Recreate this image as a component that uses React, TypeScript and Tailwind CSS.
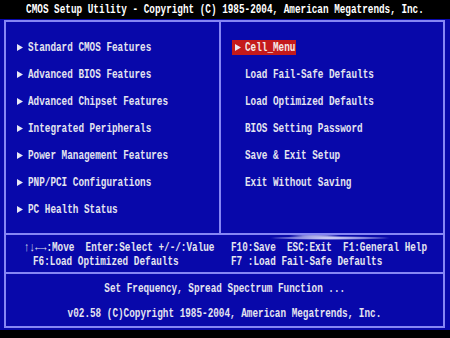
import React from "react";

const Tri = () => (
  <svg width="6" height="7" viewBox="0 0 6 7" className="shrink-0">
    <polygon points="0,0 6,3.5 0,7" fill="#e8e8f4" />
  </svg>
);

const T = ({ children, className = "" }: { children: React.ReactNode; className?: string }) => (
  <span className={"inline-block shrink-0 whitespace-pre scale-x-[0.718] origin-left " + className}>{children}</span>
);

const TC = ({ children, className = "" }: { children: React.ReactNode; className?: string }) => (
  <span className={"inline-block shrink-0 whitespace-pre scale-x-[0.718] origin-center " + className}>{children}</span>
);

const left = [
  "Standard CMOS Features",
  "Advanced BIOS Features",
  "Advanced Chipset Features",
  "Integrated Peripherals",
  "Power Management Features",
  "PNP/PCI Configurations",
  "PC Health Status",
];

const right = [
  "Load Fail-Safe Defaults",
  "Load Optimized Defaults",
  "BIOS Setting Password",
  "Save & Exit Setup",
  "Exit Without Saving",
];

export default function App() {
  return (
    <div
      className="w-[450px] h-[338px] bg-black overflow-hidden text-[13px] font-bold leading-none text-[#e4e4f0]"
      style={{ fontFamily: '"Liberation Mono", monospace' }}
    >
      <div className="h-[19px] flex items-center justify-center text-white">
        <TC>CMOS Setup Utility - Copyright (C) 1985-2004, American Megatrends, Inc.</TC>
      </div>
      <div className="h-[311px] bg-[#0808aa] pt-[1px] pl-[4px] pr-[5px] relative">
        <div className="h-[308px] border-2 border-[#8686f4] flex flex-col">
          <div className="h-[213px] flex">
            <div className="w-[215px] shrink-0 pt-[12px] border-r-2 border-[#8686f4] overflow-hidden">
              {left.map((t) => (
                <div key={t} className="h-[27px] flex items-center pl-[11px]">
                  <Tri />
                  <span className="w-[5px] shrink-0" />
                  <T>{t}</T>
                </div>
              ))}
            </div>
            <div className="flex-1 pt-[12px] overflow-hidden">
              <div className="h-[27px] flex items-center pl-[11px]">
                <div className="w-[64px] h-[15px] shrink-0 bg-[#c41a1c] flex items-center pl-[3px] overflow-visible">
                  <Tri />
                  <span className="w-[4px] shrink-0" />
                  <T className="text-[#f4e8e8]">Cell_Menu</T>
                </div>
              </div>
              {right.map((t) => (
                <div key={t} className="h-[27px] flex items-center pl-[24px]">
                  <T>{t}</T>
                </div>
              ))}
            </div>
          </div>
          <div className="h-[39px] border-t-2 border-[#8686f4] pt-[5px] relative overflow-hidden">
            <div className="flex h-[14px] items-center">
              <div className="w-[225px] shrink-0 pl-[18px]">
                <T>{"↑↓←→:Move  Enter:Select +/-/:Value"}</T>
              </div>
              <div className="flex-1">
                <T>{"F10:Save  ESC:Exit  F1:General Help"}</T>
              </div>
            </div>
            <div className="flex h-[14px] items-center">
              <div className="w-[225px] shrink-0 pl-[27px]">
                <T>F6:Load Optimized Defaults</T>
              </div>
              <div className="flex-1">
                <T>F7 :Load Fail-Safe Defaults</T>
              </div>
            </div>
          </div>
          <div className="flex-1 border-t-2 border-[#8686f4] flex flex-col">
            <div className="h-[26px] flex items-center justify-center pt-[2px]">
              <TC>Set Frequency, Spread Spectrum Function ...</TC>
            </div>
            <div className="h-[26px] flex items-center justify-center">
              <TC>v02.58 (C)Copyright 1985-2004, American Megatrends, Inc.</TC>
            </div>
          </div>
        </div>
        <svg className="absolute left-[255px] top-[212px] pointer-events-none" width="150" height="12" viewBox="0 0 150 12">
          <defs>
            <radialGradient id="g" cx="0.5" cy="0.5" r="0.5">
              <stop offset="0" stopColor="#ffffff" stopOpacity="1" />
              <stop offset="0.6" stopColor="#d8d8ff" stopOpacity="0.6" />
              <stop offset="1" stopColor="#ffffff" stopOpacity="0" />
            </radialGradient>
          </defs>
          <ellipse cx="75" cy="7" rx="62" ry="2" fill="url(#g)" />
          <ellipse cx="60" cy="5" rx="30" ry="1" fill="url(#g)" />
        </svg>
      </div>
    </div>
  );
}
